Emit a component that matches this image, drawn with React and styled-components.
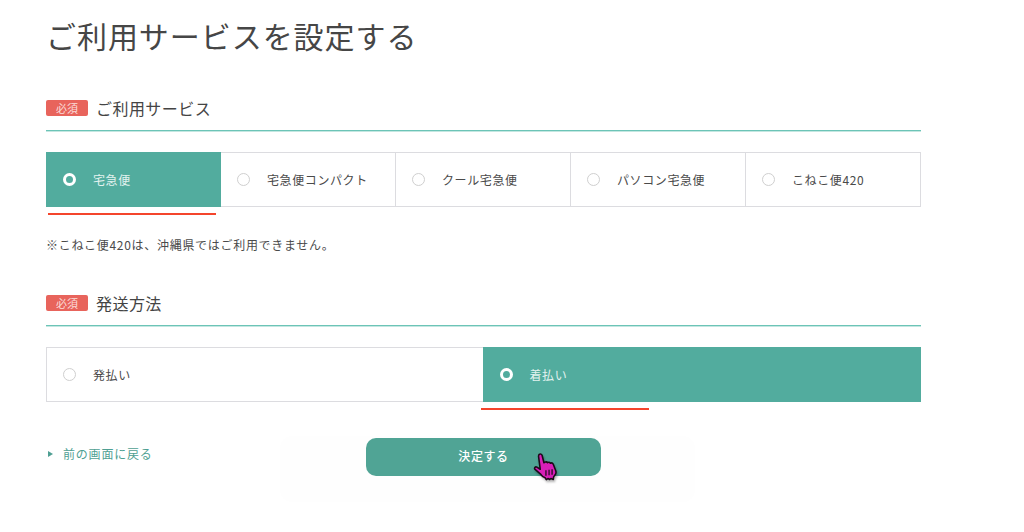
import React from 'react'
import styled, { createGlobalStyle } from 'styled-components'

const GlobalStyle = createGlobalStyle`
  html, body { margin: 0; padding: 0; background: #fff; }
  body { font-family: "Noto Sans CJK JP", "Noto Sans", sans-serif; color: #444; }
`

const Page = styled.div`
  width: 875px;
  height: 532px;
  overflow: hidden;
  margin-left: 46px;
  display: flex;
  flex-direction: column;
`

const Title = styled.h1`
  margin: 15px 0 1px 0;
  height: 40px;
  font-size: 30px;
  line-height: 40px;
  font-weight: 400;
  letter-spacing: 0.95px;
  color: #464646;
`

const SectionHead = styled.div`
  display: flex;
  align-items: center;
  gap: 8px;
  height: 37px;
  margin-top: ${(p) => p.$top}px;
  border-bottom: 1px solid #6cc4b7;
  box-shadow: 0 1px 0 #c4e7e1;
  padding-bottom: 8px;
  box-sizing: border-box;
`

const Badge = styled.span`
  width: 42px;
  height: 16px;
  border-radius: 2px;
  background: #e8645c;
  color: #fbdcd9;
  font-size: 11px;
  line-height: 16px;
  text-align: center;
`

const SectionTitle = styled.h2`
  margin: 0;
  font-size: 16px;
  line-height: 22px;
  font-weight: 400;
  letter-spacing: 0.45px;
  color: #444;
`

const Options = styled.div`
  display: grid;
  grid-template-columns: repeat(${(p) => p.$cols}, 1fr);
  margin-top: 21px;
  height: 55px;
`

const Option = styled.div`
  position: relative;
  display: flex;
  align-items: center;
  gap: 17px;
  padding-left: 16px;
  padding-bottom: 1px;
  box-sizing: border-box;
  border: 1px solid ${(p) => (p.$active ? '#52ac9e' : '#dcdce0')};
  border-left-width: ${(p) => (p.$first || p.$active ? 1 : 0)}px;
  margin-left: ${(p) => (p.$active && !p.$first ? -1 : 0)}px;
  background: ${(p) => (p.$active ? '#52ac9e' : '#fff')};
  color: ${(p) => (p.$active ? '#e2f2ef' : '#4a4a4a')};
  font-size: 12px;
  letter-spacing: 0.6px;
`

const Radio = styled.span`
  flex: none;
  width: 13px;
  height: 13px;
  box-sizing: border-box;
  border-radius: 50%;
  background: ${(p) => (p.$active ? '#52ac9e' : '#fff')};
  border: ${(p) => (p.$active ? '3px solid #fff' : '1px solid #cfcfcf')};
`

const RedMark = styled.span`
  position: absolute;
  left: ${(p) => (p.$first ? 1 : -3)}px;
  bottom: -9px;
  width: 168px;
  height: 2px;
  background: #f4452c;
`

const Note = styled.p`
  margin: 29px 0 0;
  font-size: 12px;
  line-height: 17px;
  letter-spacing: 0.7px;
  color: #4a4a4a;
`

const Footer = styled.div`
  position: relative;
  display: flex;
  align-items: flex-start;
  margin-top: 34px;
  height: 66px;
`

const BackLink = styled.a`
  display: flex;
  align-items: center;
  gap: 10px;
  margin: 8px 0 0 2px;
  width: 318px;
  font-size: 12px;
  line-height: 20px;
  letter-spacing: 0.8px;
  color: #4f9f93;
`

const Triangle = styled.span`
  width: 0;
  height: 0;
  border-left: 5px solid #4f9f93;
  border-top: 3px solid transparent;
  border-bottom: 3px solid transparent;
`

const SubmitGlow = styled.div`
  padding: 2px 94px 26px 86px;
  margin-left: -86px;
  background: #fefefe;
  border-radius: 12px;
`

const SubmitButton = styled.button`
  position: relative;
  display: block;
  width: 235px;
  height: 38px;
  padding: 0 0 4px;
  border: none;
  border-radius: 10px;
  background: #50a495;
  color: #fff;
  font-family: inherit;
  font-size: 12px;
  font-weight: 500;
  letter-spacing: 0.6px;
`

const Pointer = styled.svg`
  position: absolute;
  left: 167px;
  top: 15px;
  filter: drop-shadow(1px 2px 1px rgba(0, 0, 0, 0.3));
`

const services = ['宅急便', '宅急便コンパクト', 'クール宅急便', 'パソコン宅急便', 'こねこ便420']
const payments = ['発払い', '着払い']

const OptionGroup = ({ items, active }) => (
  <Options $cols={items.length}>
    {items.map((label, i) => (
      <Option key={label} $active={i === active} $first={i === 0}>
        <Radio $active={i === active} />
        {label}
        {i === active && <RedMark $first={i === 0} />}
      </Option>
    ))}
  </Options>
)

const App = () => (
  <>
    <GlobalStyle />
    <Page>
      <Title>ご利用サービスを設定する</Title>
      <SectionHead $top={38}>
        <Badge>必須</Badge>
        <SectionTitle>ご利用サービス</SectionTitle>
      </SectionHead>
      <OptionGroup items={services} active={0} />
      <Note>※こねこ便420は、沖縄県ではご利用できません。</Note>
      <SectionHead $top={36}>
        <Badge>必須</Badge>
        <SectionTitle>発送方法</SectionTitle>
      </SectionHead>
      <OptionGroup items={payments} active={1} />
      <Footer>
        <BackLink>
          <Triangle />
          前の画面に戻る
        </BackLink>
        <SubmitGlow>
          <SubmitButton>
            決定する
            <Pointer width="27" height="29" viewBox="0 0 24 26">
              <path
                d="M5.500 1.200c1-.7 2.300-.1 2.600 1l1.600 6.500 1-.5c1-.5 1.800-.2 2.300.5.800-.6 2-.4 2.500.5.900-.5 2-.2 2.500.7l2.300 6c.5 1.400.2 2.800-.7 3.900l-1.200 1.600-.3 2.300-2.200-.9-1 1-1.600-.9-1.500 1-1-1.600c-1.700-.5-3-1.700-3.900-3.200L1.500 14.500c-.6-1 .3-2.300 1.500-2l3.400 2.100L5 4c-.2-1 0-2.300.5-2.800z"
                fill="#d81fb8"
                stroke="#1a0a18"
                strokeWidth="1.4"
                strokeLinejoin="round"
              />
              <path d="M11.500 15.500v5M14.300 15v5M17 14.500v5" stroke="#1a0a18" strokeWidth="1.1" />
            </Pointer>
          </SubmitButton>
        </SubmitGlow>
      </Footer>
    </Page>
  </>
)

export default App
